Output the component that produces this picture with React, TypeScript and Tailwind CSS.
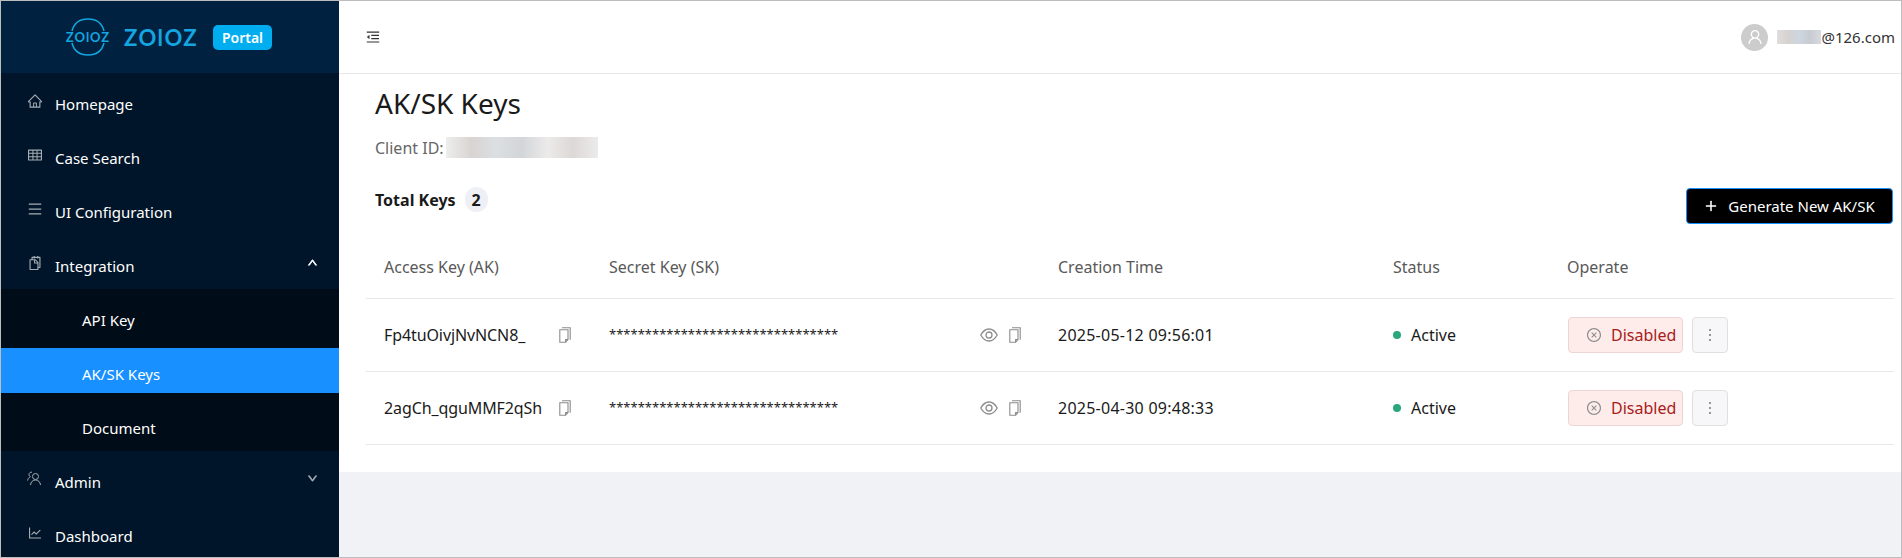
import {
  AiOutlineHome,
  AiOutlineTable,
  AiOutlineMenu,
  AiOutlineSnippets,
  AiOutlineLineChart,
  AiOutlineUp,
  AiOutlineDown,
  AiOutlinePlus,
  AiOutlineUser,
  AiOutlineCloseCircle,
  AiOutlineMenuFold,
} from "react-icons/ai";

const FONT = "font-['Noto_Sans','Open_Sans',sans-serif]";

const keys = [
  { ak: "Fp4tuOivjNvNCN8_", time: "2025-05-12 09:56:01" },
  { ak: "2agCh_qguMMF2qSh", time: "2025-04-30 09:48:33" },
];

function CopyIcon() {
  return (
    <svg width="12" height="16" viewBox="0 0 12 16" fill="none" stroke="#8c8c8c" strokeWidth="1.1">
      <path d="M3 .8h8.200v12" />
      <path d="M.8 2.800h8.200v9.800l-2.400 2.600H.8z" />
      <path d="M9 12.600H6.600v2.600" />
    </svg>
  );
}

function EyeIcon() {
  return (
    <svg width="18" height="14" viewBox="0 0 18 14" fill="none" stroke="#8c8c8c" strokeWidth="1.3">
      <path d="M.8 7C3 3 5.800 1 9 1s6 2 8.200 6c-2.200 4-5 6-8.200 6S3 11 .8 7z" />
      <circle cx="9" cy="7" r="3" />
    </svg>
  );
}

function AdminIcon() {
  return (
    <svg width="15" height="15" viewBox="0 0 15 15" fill="none" stroke="#a6adb4" strokeWidth="1">
      <circle cx="8.500" cy="5.500" r="3" />
      <path d="M3.500 14c.3-3 2.200-5 5-5s4.700 2 5 5" />
      <path d="M5 1.200C3.500.8 2 2 2 3.500c0 1 .5 1.800 1.300 2.300C1.800 6.600.8 8 .6 9.500" />
    </svg>
  );
}

function Logo() {
  return (
    <svg width="44" height="44" viewBox="0 0 44 44" fill="none">
      <path d="M6 16C8 8 14 4 22 4s14 4 16 12" stroke="#14a6e0" strokeWidth="1.500" />
      <path d="M6 28c2 8 8 12 16 12s14-4 16-12" stroke="#14a6e0" strokeWidth="1.500" />
      <text
        x="22"
        y="27"
        textAnchor="middle"
        fill="#14a6e0"
        fontSize="13"
        fontWeight="700"
        letterSpacing="1"
        fontFamily="Lato, sans-serif"
      >
        ZOlOZ
      </text>
    </svg>
  );
}

function NavItem({ icon, label, chevron }: { icon: React.ReactNode; label: string; chevron?: "up" | "down" }) {
  return (
    <div className="relative flex h-[45px] items-center pl-[26px] text-[15px] text-white">
      <span className="flex w-[28px] -translate-y-1 text-[16px] text-[#a6adb4]">{icon}</span>
      <span>{label}</span>
      {chevron === "up" && <AiOutlineUp className="absolute right-[21px] top-[13px] text-[11px] text-white" strokeWidth={80} />}
      {chevron === "down" && <AiOutlineDown className="absolute right-[21px] top-[13px] text-[11px] text-[#a6adb4]" strokeWidth={80} />}
    </div>
  );
}

function SubItem({ label, active }: { label: string; active?: boolean }) {
  return (
    <div className={`flex h-[45px] items-start pl-[81px] pt-[15px] text-[15px] text-white ${active ? "bg-[#1890ff]" : ""}`}>
      {label}
    </div>
  );
}

function Sidebar() {
  return (
    <aside className="flex h-full w-[338px] shrink-0 flex-col overflow-hidden bg-[#001529]">
      <div className="flex h-[72px] shrink-0 items-center bg-[#002140] pl-[65px]">
        <Logo />
        <span className="ml-[14px] w-[73px] font-['Lato',sans-serif] text-[22px] font-bold tracking-[1.500px] text-[#14a6e0]">ZOlOZ</span>
        <span className="ml-[16px] flex h-[25px] w-[59px] items-center justify-center rounded-[5px] bg-[#00aeef] text-[14px] font-semibold text-white">
          Portal
        </span>
      </div>
      <nav className="flex flex-col gap-[9px] pt-[9px]">
        <NavItem icon={<AiOutlineHome />} label="Homepage" />
        <NavItem icon={<AiOutlineTable />} label="Case Search" />
        <NavItem icon={<AiOutlineMenu />} label="UI Configuration" />
        <div>
          <NavItem icon={<AiOutlineSnippets />} label="Integration" chevron="up" />
          <div className="flex flex-col gap-[9px] bg-[#000c17] pb-[4px] pt-[5px]">
            <SubItem label="API Key" />
            <SubItem label="AK/SK Keys" active />
            <SubItem label="Document" />
          </div>
        </div>
        <NavItem icon={<AdminIcon />} label="Admin" chevron="down" />
        <NavItem icon={<AiOutlineLineChart />} label="Dashboard" />
      </nav>
    </aside>
  );
}

function Header() {
  return (
    <header className="flex h-[73px] shrink-0 items-center justify-between border-b border-[#e8e8e8] bg-white pl-[26px] pr-[6px]">
      <AiOutlineMenuFold className="text-[16px] text-[#333]" />
      <div className="flex items-center text-[15px] text-[#333]">
        <span className="flex h-[27px] w-[27px] items-center justify-center rounded-full bg-[#ccc] text-[18px] text-white">
          <AiOutlineUser />
        </span>
        <span className="ml-[9px] h-[14px] w-[44px] bg-[linear-gradient(90deg,#e0dede,#d6d2cf,#cdd6e0,#c7cbd2,#d8dadf)]" />
        <span>@126.com</span>
      </div>
    </header>
  );
}

function KeyTable() {
  return (
    <div className="ml-[27px] mr-[7px] mt-[13px]">
      <div className="grid h-[62px] grid-cols-[225px_449px_335px_174px_1fr] items-center border-b border-[#e8e8e8] pb-[2px] text-[16px] text-[#595959]">
        <div className="pl-[18px]">Access Key (AK)</div>
        <div className="pl-[18px]">Secret Key (SK)</div>
        <div className="pl-[18px]">Creation Time</div>
        <div className="pl-[18px]">Status</div>
        <div className="pl-[18px]">Operate</div>
      </div>
      {keys.map((row) => (
        <div
          key={row.ak}
          className="grid h-[73px] grid-cols-[225px_449px_335px_174px_1fr] items-center border-b border-[#e8e8e8] text-[16px] text-[#1a1a1a]"
        >
          <div className="flex items-center justify-between pl-[18px] pr-[20px]">
            <span className="tracking-[-0.1px]">{row.ak}</span>
            <CopyIcon />
          </div>
          <div className="flex items-center justify-between pl-[18px] pr-[19px]">
            <span className="text-[13px]">********************************</span>
            <span className="flex items-center gap-[11px]">
              <EyeIcon />
              <CopyIcon />
            </span>
          </div>
          <div className="pl-[18px] tracking-[0.25px]">{row.time}</div>
          <div className="flex items-center pl-[18px]">
            <span className="mr-[10px] h-[8px] w-[8px] rounded-full bg-[#2ba77e]" />
            Active
          </div>
          <div className="flex items-center pl-[19px]">
            <button className="flex h-[36px] w-[115px] items-center rounded-[4px] border border-[#eed5d5] bg-[#fdecea] pl-[17px] text-[#a8201a]">
              <AiOutlineCloseCircle className="mr-[9px] text-[16px] text-[#8c8c8c]" />
              Disabled
            </button>
            <button className="ml-[9px] flex h-[36px] w-[36px] flex-col items-center justify-center gap-[3px] rounded-[4px] border border-[#e0e0e0] bg-[#f7f7f9]">
              <span className="h-[2px] w-[2px] rounded-full bg-[#777]" />
              <span className="h-[2px] w-[2px] rounded-full bg-[#777]" />
              <span className="h-[2px] w-[2px] rounded-full bg-[#777]" />
            </button>
          </div>
        </div>
      ))}
    </div>
  );
}

export default function App() {
  return (
    <div className={`flex h-[558px] w-[1902px] overflow-hidden border border-[#bdbdbd] bg-[#f0f2f5] ${FONT}`}>
      <Sidebar />
      <main className="flex min-w-0 flex-1 flex-col">
        <Header />
        <section className="h-[398px] bg-white">
          <div className="px-[36px] pt-[9px]">
            <h1 className="text-[28px] leading-[40px] text-[#1a1a1a]">AK/SK Keys</h1>
            <div className="mt-[14px] flex h-[21px] items-center text-[16px] text-[#666]">
              Client ID:
              <span className="ml-[2px] h-[21px] w-[152px] bg-[linear-gradient(90deg,#eeeeee,#d8d4d2,#dcdfe2,#d3d6d8,#eceaea,#dcd8d6,#ecebeb)]" />
            </div>
          </div>
          <div className="mt-[10px] flex items-start justify-between pl-[36px] pr-[8px]">
            <div className="mt-[19px] flex items-center text-[16px] font-bold text-[#1a1a1a]">
              Total Keys
              <span className="ml-[9px] flex h-[25px] w-[23px] items-center justify-center rounded-full bg-[#eff0f5]">2</span>
            </div>
            <button className="mt-[20px] flex h-[36px] w-[207px] items-center justify-center rounded-[4px] border border-[#1890ff] bg-black text-[15px] text-white">
              <AiOutlinePlus className="mr-[10px] text-[14px]" strokeWidth={40} />
              Generate New AK/SK
            </button>
          </div>
          <KeyTable />
        </section>
      </main>
    </div>
  );
}
